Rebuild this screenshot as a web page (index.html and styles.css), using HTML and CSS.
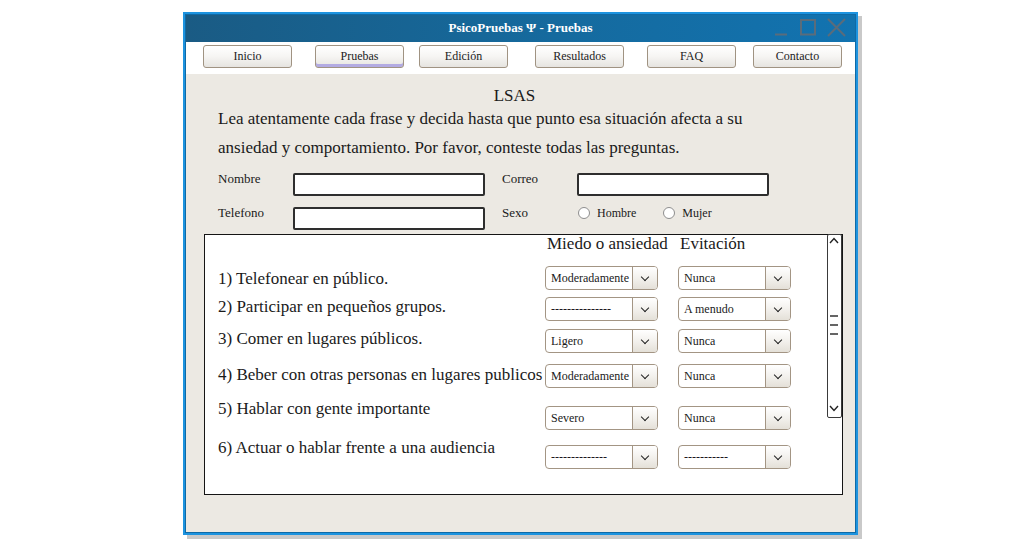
FILE: index.html
```html
<!DOCTYPE html>
<html lang="es">
<head>
<meta charset="utf-8">
<title>PsicoPruebas</title>
<link rel="stylesheet" href="styles.css">
</head>
<body>
<div class="window">
  <div class="titlebar">
    <span class="title">PsicoPruebas Ψ - Pruebas</span>
    <svg class="controls" width="76" height="20" viewBox="0 0 76 20">
      <path d="M3 16.5 H15" stroke="#5a6c7b" stroke-width="2" fill="none"/>
      <rect x="29" y="2" width="14" height="14.5" stroke="#5a6c7b" stroke-width="2" fill="none"/>
      <path d="M56 1 L73 18 M73 1 L56 18" stroke="#5a6c7b" stroke-width="2" fill="none"/>
    </svg>
  </div>
  <nav class="navbar">
    <button class="navbtn">Inicio</button>
    <button class="navbtn active">Pruebas</button>
    <button class="navbtn">Edición</button>
    <button class="navbtn">Resultados</button>
    <button class="navbtn">FAQ</button>
    <button class="navbtn">Contacto</button>
  </nav>
  <main class="content">
    <div class="intro">
      <h1 class="heading">LSAS</h1>
      <p class="lead">Lea atentamente cada frase y decida hasta que punto esa situación afecta a su<br>ansiedad y comportamiento. Por favor, conteste todas las preguntas.</p>
    </div>
    <div class="form">
      <span class="flabel">Nombre</span>
      <span class="field"></span>
      <span class="flabel">Correo</span>
      <span class="field"></span>
      <span class="flabel">Telefono</span>
      <span class="field"></span>
      <span class="flabel">Sexo</span>
      <span class="radios">
        <span class="radio"><span class="dot"></span>Hombre</span>
        <span class="radio"><span class="dot"></span>Mujer</span>
      </span>
    </div>
    <section class="panel">
      <div class="qhead">
        <span></span>
        <span class="colhead">Miedo o ansiedad</span>
        <span></span>
        <span class="colhead">Evitación</span>
      </div>
      <div class="q r1">
        <span class="qtext">1) Telefonear en público.</span>
        <span class="select"><span class="sval">Moderadamente</span><span class="sbtn"></span></span>
        <span></span>
        <span class="select"><span class="sval">Nunca</span><span class="sbtn"></span></span>
      </div>
      <div class="q r2">
        <span class="qtext">2) Participar en pequeños grupos.</span>
        <span class="select"><span class="sval">---------------</span><span class="sbtn"></span></span>
        <span></span>
        <span class="select"><span class="sval">A menudo</span><span class="sbtn"></span></span>
      </div>
      <div class="q r3">
        <span class="qtext">3) Comer en lugares públicos.</span>
        <span class="select"><span class="sval">Ligero</span><span class="sbtn"></span></span>
        <span></span>
        <span class="select"><span class="sval">Nunca</span><span class="sbtn"></span></span>
      </div>
      <div class="q r4">
        <span class="qtext">4) Beber con otras personas en lugares publicos</span>
        <span class="select"><span class="sval">Moderadamente</span><span class="sbtn"></span></span>
        <span></span>
        <span class="select"><span class="sval">Nunca</span><span class="sbtn"></span></span>
      </div>
      <div class="q r5">
        <span class="qtext">5) Hablar con gente importante</span>
        <span class="select"><span class="sval">Severo</span><span class="sbtn"></span></span>
        <span></span>
        <span class="select"><span class="sval">Nunca</span><span class="sbtn"></span></span>
      </div>
      <div class="q r6">
        <span class="qtext">6) Actuar o hablar frente a una audiencia</span>
        <span class="select"><span class="sval">--------------</span><span class="sbtn"></span></span>
        <span></span>
        <span class="select"><span class="sval">-----------</span><span class="sbtn"></span></span>
      </div>
      <div class="scrollbar">
        <svg width="12" height="181" viewBox="0 0 12 181">
          <path d="M2 8 L6 3.5 L10 8" stroke="#222" stroke-width="1.4" fill="none"/>
          <path d="M2 81 H10 M2 90 H10 M2 99 H10" stroke="#333" stroke-width="1.6" fill="none"/>
          <path d="M2 171 L6 175.5 L10 171" stroke="#222" stroke-width="1.4" fill="none"/>
        </svg>
      </div>
    </section>
  </main>
</div>
</body>
</html>
```

FILE: styles.css
```css
* { box-sizing: border-box; }

html, body {
  margin: 0;
  padding: 0;
  background: #ffffff;
  font-family: "Liberation Serif", "DejaVu Serif", serif;
  color: #1a1a1a;
}

body {
  width: 1028px;
  height: 545px;
  overflow: hidden;
  padding: 12px 0 0 183px;
}

.window {
  width: 675px;
  height: 523px;
  border: 3px solid #1d93df;
  box-shadow: 4px 4px 0 #c9c9c9;
  background: #ece9e3;
  display: flex;
  flex-direction: column;
  outline: 1px solid #0f6aa6;
  outline-offset: -3px;
}

.titlebar {
  position: relative;
  height: 27px;
  flex: none;
  display: flex;
  align-items: center;
  justify-content: center;
  background: linear-gradient(90deg, #1a5b84 0%, #156a9e 55%, #1273b0 100%);
}

.title {
  color: #ffffff;
  font-weight: bold;
  font-size: 13px;
  margin-top: -2px;
}

.controls {
  position: absolute;
  right: 7px;
  top: 3px;
}

.navbar {
  height: 32px;
  flex: none;
  background: #ffffff;
  display: flex;
  align-items: flex-start;
  padding: 3px 0 0 17px;
}

.navbtn {
  width: 89px;
  height: 23px;
  padding: 0;
  border: 1px solid #a09382;
  border-radius: 3px;
  background: linear-gradient(180deg, #ffffff 0%, #f6f5f3 50%, #e6e4e0 100%);
  font-family: "Liberation Serif", "DejaVu Serif", serif;
  font-size: 12px;
  color: #222;
}

.navbtn:nth-child(2) { margin-left: 23px; }
.navbtn:nth-child(3) { margin-left: 15px; }
.navbtn:nth-child(4) { margin-left: 27px; }
.navbtn:nth-child(5) { margin-left: 23px; }
.navbtn:nth-child(6) { margin-left: 17px; }

.navbtn.active {
  box-shadow: inset 0 -3px 0 #b3abe2;
}

.content {
  flex: 1;
  padding-top: 13px;
}

.intro {
  width: 625px;
  padding-left: 32px;
}

.heading {
  margin: 0;
  font-weight: normal;
  font-size: 17px;
  line-height: 18px;
  text-align: center;
}

.lead {
  margin: -1px 0 0;
  font-size: 17px;
  line-height: 29px;
  white-space: nowrap;
}

.form {
  margin: 11px 0 0 32px;
  display: grid;
  grid-template-columns: 75px 192px 92px 192px;
  row-gap: 11px;
  align-items: start;
}

.form .flabel:nth-child(3),
.form .flabel:nth-child(7) {
  margin-left: 17px;
}

.flabel {
  font-size: 13px;
  line-height: 14px;
  margin-top: -1px;
}

.field {
  height: 23px;
  border: 2px solid #2e2e2e;
  border-radius: 2px;
  background: #ffffff;
}

.radios {
  display: flex;
  gap: 27px;
  padding-left: 1px;
  margin-top: -1px;
  font-size: 12px;
  line-height: 14px;
}

.radio {
  display: flex;
  align-items: center;
  gap: 7px;
}

.dot {
  width: 12px;
  height: 12px;
  border: 1px solid #8e8e8e;
  border-radius: 50%;
  background: #ffffff;
}

.panel {
  position: relative;
  margin: 4px 0 0 18px;
  width: 639px;
  height: 261px;
  background: #ffffff;
  border: 1px solid #151515;
  padding-left: 13px;
}

.qhead, .q {
  display: grid;
  grid-template-columns: 327px 113px 20px 113px;
  align-items: start;
}

.colhead {
  font-size: 17px;
  line-height: 18px;
  padding-left: 2px;
  white-space: nowrap;
}

.qtext {
  font-size: 17px;
  line-height: 18px;
  white-space: nowrap;
}

.r1 { margin-top: 13px; }
.r2 { margin-top: 7px; }
.r3 { margin-top: 8px; }
.r4 { margin-top: 11px; }
.r5 { margin-top: 18px; }
.r6 { margin-top: 15px; }

.r1 .qtext { margin-top: 4px; }
.r2 .qtext { margin-top: 1px; }
.r3 .qtext { margin-top: 1px; }
.r4 .qtext { margin-top: 2px; }
.r5 .qtext { margin-top: -6px; }
.r6 .qtext { margin-top: -6px; }

.select {
  height: 24px;
  display: flex;
  border: 1px solid #a39584;
  border-radius: 4px;
  background: #ffffff;
  overflow: hidden;
}

.sval {
  flex: 1;
  font-size: 12px;
  line-height: 22px;
  padding-left: 5px;
  white-space: nowrap;
  overflow: hidden;
}

.sbtn {
  width: 25px;
  flex: none;
  border-left: 1px solid #a39584;
  background: linear-gradient(180deg, #ffffff 0%, #f3f1ed 50%, #e4e0d8 100%);
  position: relative;
}

.sbtn::after {
  content: "";
  position: absolute;
  left: 9px;
  top: 7px;
  width: 5px;
  height: 5px;
  border-right: 1.6px solid #222;
  border-bottom: 1.6px solid #222;
  transform: rotate(45deg);
}

.scrollbar {
  position: absolute;
  right: 0;
  top: -1px;
  width: 15px;
  height: 184px;
  border: 1.5px solid #3a3a3a;
  border-radius: 2px;
  background: #ffffff;
}

.scrollbar svg { display: block; }
```
